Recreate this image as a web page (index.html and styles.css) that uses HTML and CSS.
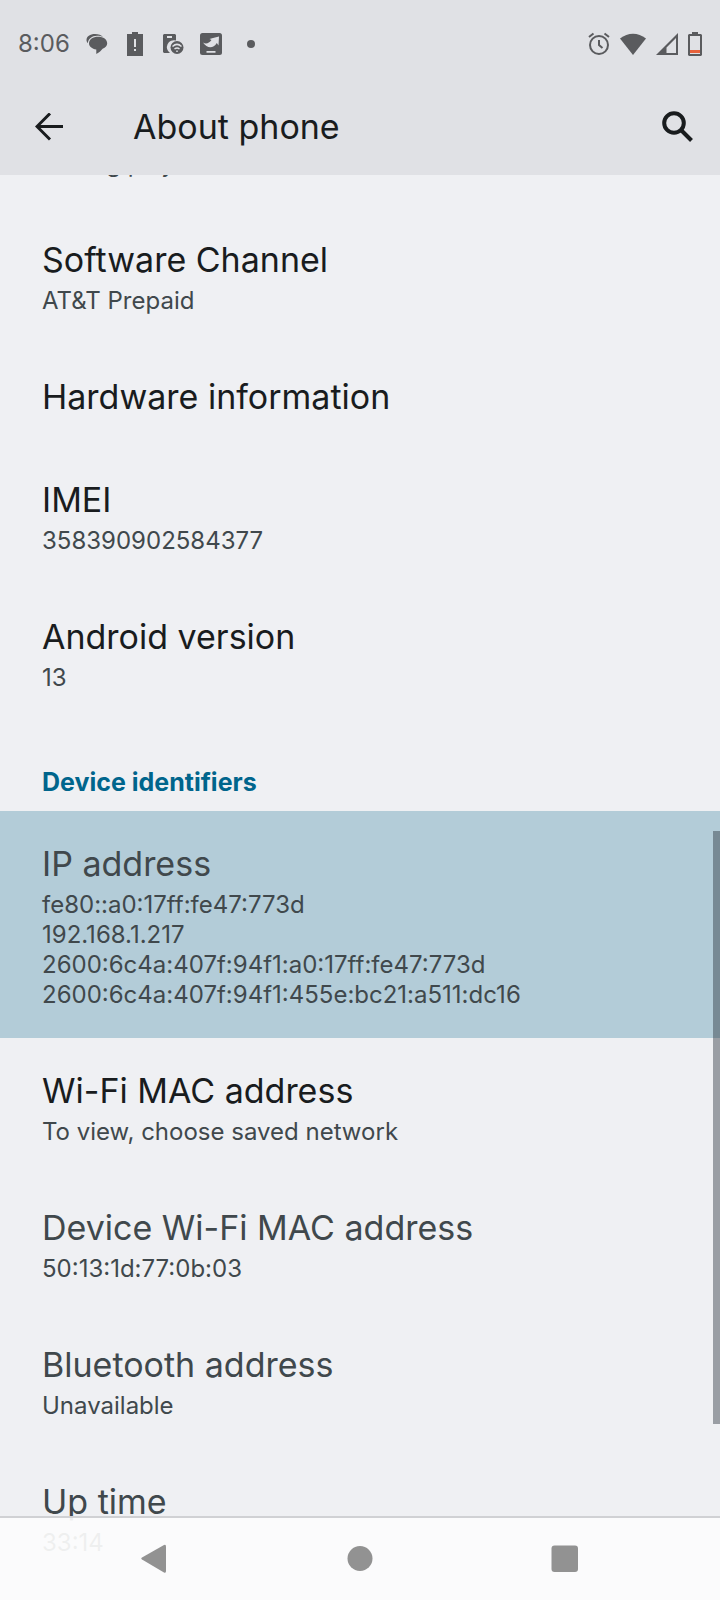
FILE: index.html
```html
<!DOCTYPE html>
<html lang="en">
<head>
<meta charset="utf-8">
<meta name="viewport" content="width=device-width, initial-scale=1">
<title>About phone</title>
<link rel="stylesheet" href="styles.css">
</head>
<body>
<div class="screen">
  <header class="top">
    <div class="status">
      <div class="status-group status-left">
        <span class="clock">8:06</span>
        <svg width="22" height="22" viewBox="0 0 22 22"><path d="M9 1C4 1 .5 3.500 .5 7c0 1.300 .6 2.400 1.400 3.300C2 6 6 2.800 11 2.800c2.500 0 4.500 .5 6 1.200C15.500 2 12.500 1 9 1z"/><path d="M12 3.800C7 3.800 3 6.500 3 10.300c0 3.200 3 5.700 7.300 6.200V21c3-1.500 5-3.400 6.300-5.200 3-1.200 4.600-3.200 4.600-5.500C21.200 6.500 17.500 3.800 12 3.800z"/></svg>
        <svg width="22" height="24" viewBox="0 0 22 24"><path fill-rule="evenodd" d="M8 0h6v2h5v22H3V2h5zM10 7v8h2V7zm0 10v2h2v-2z"/></svg>
        <svg width="22" height="22" viewBox="0 0 22 22"><path fill-rule="evenodd" d="M2 1h11l1 1v5.500A7 7 0 0 0 8 20H2l-1-1V2zm3 2v2h5V3z"/><circle cx="15" cy="14.500" r="6.500"/><g class="cutline"><path d="M10.500 13.500c3-2.800 6-2.800 9 0M12.500 16c2-1.500 3.200-1.500 5 0"/><path d="M15 17.500v1.500"/></g></svg>
        <svg width="22" height="22" viewBox="0 0 22 22"><rect width="22" height="22" rx="2.500"/><path class="cut" d="M3 9.500c3 1.800 6 .8 8.500-2.500L9.500 6 13 5l6-1.500-.5 9-1.700-2.500C13 16 7 15.500 3 9.500zM6.500 18h9v1.700h-9z"/></svg>
        <span class="dot"></span>
      </div>
      <div class="status-group status-right">
        <svg width="22" height="24" viewBox="0 0 22 24"><g class="line"><circle cx="11" cy="13" r="9"/><path d="M11 8v5l3.500 3M1 5l4.500-3.500M21 5l-4.500-3.500"/></g></svg>
        <svg width="26" height="22" viewBox="0 0 26 22"><path d="M0 5.500C8-1 18-1 26 5.500L13 22z"/></svg>
        <svg width="22" height="22" viewBox="0 0 22 22"><path fill-rule="evenodd" d="M22 0v22H0zM20 5l-9.500 9.500V20H20z"/></svg>
        <svg width="14" height="24" viewBox="0 0 14 24"><path fill-rule="evenodd" d="M4 0h6v2h3l1 1v20l-1 1H1l-1-1V3l1-1h3zM2 4v18h10V4z"/><path class="low" d="M2 18h10v3H2z"/></svg>
      </div>
    </div>
    <div class="appbar">
      <button class="icon-button" aria-label="Back"><svg width="28" height="28" viewBox="0 0 28 28"><path d="M28 13.500H2.500M15 .5l-13 13 13 13"/></svg></button>
      <h1>About phone</h1>
      <button class="icon-button" aria-label="Search"><svg class="search" width="32" height="32" viewBox="0 0 32 32"><circle cx="13" cy="12" r="9.800"/><path d="m20 19 10.500 10.500"/></svg></button>
    </div>
  </header>
  <main class="content">
    <section class="list">
      <div class="item"><h2>Model</h2><p>moto g play</p></div>
      <div class="item"><h2>Software Channel</h2><p>AT&amp;T Prepaid</p></div>
      <div class="item"><h2>Hardware information</h2></div>
      <div class="item"><h2>IMEI</h2><p>358390902584377</p></div>
      <div class="item"><h2>Android version</h2><p>13</p></div>
    </section>
    <section>
      <h3 class="category">Device identifiers</h3>
      <div class="item muted selected"><h2>IP address</h2><p>fe80::a0:17ff:fe47:773d<br>192.168.1.217<br>2600:6c4a:407f:94f1:a0:17ff:fe47:773d<br>2600:6c4a:407f:94f1:455e:bc21:a511:dc16</p></div>
      <div class="item"><h2>Wi-Fi MAC address</h2><p>To view, choose saved network</p></div>
      <div class="item muted"><h2>Device Wi-Fi MAC address</h2><p>50:13:1d:77:0b:03</p></div>
      <div class="item muted"><h2>Bluetooth address</h2><p>Unavailable</p></div>
      <div class="item muted"><h2>Up time</h2><p>33:14</p></div>
    </section>
    <div class="scrollbar"></div>
  </main>
  <nav class="navbar">
    <button aria-label="Back"><svg width="28" height="30" viewBox="0 0 28 30"><path d="M23 1 1 13.500Q-.5 14.500 1 15.500L23 28.500Q25 29.500 25 27V2.500Q25 0 23 1z"/></svg></button>
    <button aria-label="Home"><svg width="26" height="26" viewBox="0 0 26 26"><circle cx="13" cy="12.500" r="12.500"/></svg></button>
    <button aria-label="Recent apps"><svg width="28" height="28" viewBox="0 0 28 28"><rect x=".5" y=".5" width="26.500" height="26.500" rx="3"/></svg></button>
  </nav>
</div>
</body>
</html>
```
FILE: styles.css
```css
* { box-sizing: border-box; }
body, h1, h2, h3, p { margin: 0; font-weight: 400; }
body {
  font-family: Inter, "Open Sans", sans-serif;
  background: #eff0f3;
  color: #191c1e;
}
button { border: 0; padding: 0; background: none; color: inherit; }
svg { display: block; fill: currentColor; }
.screen {
  position: relative;
  display: flex;
  flex-direction: column;
  height: 100vh;
  overflow: hidden;
}
.top { background: #e0e1e5; }
.status {
  display: flex;
  justify-content: space-between;
  align-items: center;
  height: 78px;
  padding: 9px 18px 0;
  color: #5a5b5e;
}
.status-group { display: flex; align-items: center; }
.status-left { gap: 16px; }
.status-right { gap: 10px; }
.clock { font-size: 24px; line-height: 30px; }
.dot { width: 8px; height: 8px; margin-left: 9px; border-radius: 50%; background: currentColor; }
.cut { fill: #e0e1e5; }
.cutline { fill: none; stroke: #e0e1e5; stroke-width: 1.5; }
.line { fill: none; stroke: currentColor; stroke-width: 2; }
.low { fill: #e8623c; }
.appbar {
  display: flex;
  align-items: center;
  height: 97px;
  padding: 0 27px 0 35px;
}
.appbar h1 { flex: 1; margin-left: 70px; font-size: 34px; line-height: 43px; }
.icon-button svg { fill: none; stroke: currentColor; stroke-width: 3; }
.icon-button .search { stroke-width: 4; }
.content { position: relative; flex: 1; min-height: 0; overflow: hidden; }
.list { margin-top: -105px; }
.item { padding: 31px 42px 28px; }
.item h2 { font-size: 34px; line-height: 44px; }
.item p { padding-top: 4px; font-size: 24px; line-height: 30px; color: #40484c; }
.muted h2 { color: #40484c; }
.selected { background: #b3ccd8; }
.category {
  padding: 46px 42px 14px;
  font-size: 25px;
  line-height: 30px;
  font-weight: 700;
  color: #00658c;
}
.scrollbar {
  position: absolute;
  top: 656px;
  right: 0;
  width: 7px;
  height: 593px;
  background: rgba(35, 45, 55, .42);
}
.navbar {
  position: absolute;
  inset: auto 0 0;
  display: flex;
  justify-content: center;
  align-items: center;
  gap: 178px;
  height: 84px;
  border-top: 2px solid #d0d1d4;
  background: rgba(252, 252, 252, .93);
  background-clip: padding-box;
  color: #929292;
}
```
